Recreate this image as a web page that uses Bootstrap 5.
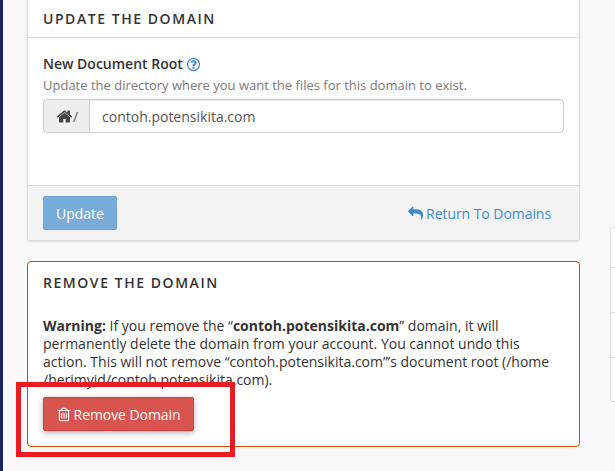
<!DOCTYPE html>
<html lang="en">
<head>
    <meta charset="UTF-8">
    <meta name="viewport" content="width=device-width, initial-scale=1.0">
    <title>Manage Domain</title>
    <link href="https://cdn.jsdelivr.net/npm/bootstrap@5.3.0/dist/css/bootstrap.min.css" rel="stylesheet">
    <style>
        html, body { height: 100%; }
        body {
            background: #f9f9f9;
            color: #333;
            font-family: "Open Sans", "Noto Sans", sans-serif;
            font-size: 14px;
            line-height: 18px;
            overflow: hidden;
        }
        .side-strip { width: 3px; background: #1c2558; flex-shrink: 0; }
        .page-main { width: 553px; margin-left: 24px; flex-shrink: 0; padding-top: 0; }
        .domain-panel {
            border: 1px solid #ddd;
            border-radius: 3px;
            box-shadow: 0 1px 3px rgba(0,0,0,.12);
            margin-top: -3px;
        }
        .domain-panel .card-header {
            background: #fff;
            border-bottom: 1px solid #ddd;
            height: 40px;
            padding: 12px 15px 0;
        }
        .panel-title {
            font-size: 14px;
            font-weight: 600;
            letter-spacing: 1.55px;
            line-height: 18px;
            text-transform: uppercase;
            color: #333;
            margin: 0;
        }
        .domain-panel .card-body { padding: 16px 15px 0; height: 147px; }
        .field-label { font-weight: 600; font-size: 14px; line-height: 20px; display: block; margin: 0; }
        .field-help { color: #7a7a7a; font-size: 13px; line-height: 18px; margin: 2px 0 5px; }
        .root-group .input-group-text {
            background: #eee;
            border-color: #ccc;
            border-radius: 4px 0 0 4px;
            color: #555;
            font-size: 14px;
            height: 34px;
            width: 47px;
            padding: 0 0 0 12px;
        }
        .home-icon { color: #444; vertical-align: -3px; }
        .root-group .form-control {
            border-color: #ccc;
            border-radius: 0 4px 4px 0;
            color: #555;
            font-size: 14px;
            height: 34px;
            padding: 0 12px;
            box-shadow: inset 0 1px 1px rgba(0,0,0,.075);
        }
        .domain-panel .card-footer {
            background: #f3f3f3;
            border-top: 1px solid #ddd;
            height: 55px;
            padding: 10px 28px 0 15px;
            border-radius: 0 0 3px 3px;
        }
        .btn-update {
            background: #78acd9;
            border: 1px solid #6fa4d3;
            border-radius: 2px;
            color: #fff;
            font-size: 14px;
            height: 34px;
            line-height: 20px;
            padding: 7px 12px 5px;
        }
        .back-link { color: #428bca; text-decoration: none; font-size: 14px; letter-spacing: -.06px; margin-top: 9px; }
        .danger-panel {
            border: 1px solid #d14900;
            border-radius: 4px;
            background: #fff;
            height: 186px;
            margin-top: 20px;
            padding: 12px 15px 0;
            box-shadow: none;
        }
        .warn-text { margin: 25px 0 0; line-height: 18px; width: 515px; }
        .warn-text strong { font-weight: 700; }
        .btn-remove {
            background: #d9534f;
            border: 1px solid #d43f3a;
            border-radius: 2px;
            color: #fff;
            font-size: 14px;
            height: 34px;
            line-height: 20px;
            padding: 7px 13px 5px 12px;
            margin-top: 8px;
            letter-spacing: -.07px;
            box-shadow: 0 2px 6px rgba(0,0,0,.3);
        }
        .fa-icon { fill: currentColor; display: inline-block; vertical-align: -2px; }
        .trash-icon { vertical-align: -3px; margin-right: -2px; }
        .help-icon { color: #428bca; vertical-align: -3px; }
        .side-widget {
            width: 60px;
            margin-left: 30px;
            margin-top: 227px;
            flex-shrink: 0;
            height: 175px;
            background: #fff;
            border: 1px solid #ddd;
            border-right: 0;
            border-radius: 4px 0 0 4px;
        }
        .side-row { height: 45px; border-bottom: 1px solid #ddd; }
        .side-row:first-child { height: 40px; }
        .side-row:last-child { border-bottom: 0; }
        .callout-box {
            position: absolute;
            left: 16px;
            top: 382px;
            width: 219px;
            height: 75px;
            border: 5px solid #ed1c24;
            pointer-events: none;
        }
    </style>
</head>
<body>
    <div class="d-flex h-100 position-relative">
        <div class="side-strip"></div>

        <div class="page-main">
            <!-- update panel -->
            <div class="card domain-panel">
                <div class="card-header">
                    <h2 class="panel-title">Update the Domain</h2>
                </div>
                <div class="card-body">
                    <label class="field-label" for="docRoot">New Document Root
                        <svg class="fa-icon help-icon" width="15" height="15" viewBox="0 0 1792 1792"><circle cx="896" cy="896" r="720" fill="none" stroke="currentColor" stroke-width="150"/><path d="M1024 1376v-192q0-14-9-23t-23-9h-192q-14 0-23 9t-9 23v192q0 14 9 23t23 9h192q14 0 23-9t9-23zm256-672q0-88-55.500-163t-138.500-116-170-41q-243 0-371 213-15 24 8 42l132 100q7 6 19 6 16 0 25-12 53-68 86-92 34-24 86-24 48 0 85.500 26t37.500 59q0 38-20 61t-68 45q-63 28-115.500 86.500t-52.500 125.500v36q0 14 9 23t23 9h192q14 0 23-9t9-23q0-19 21.500-49.500t54.500-49.500q32-18 49-28.500t46-35 44.500-48 28-60.500 12.500-81z"/></svg>
                    </label>
                    <p class="field-help">Update the directory where you want the files for this domain to exist.</p>
                    <div class="input-group root-group">
                        <span class="input-group-text">
                            <svg class="fa-icon home-icon" width="17" height="17" viewBox="0 0 1792 1792"><path d="M1472 992v480q0 26-19 45t-45 19h-384v-384h-256v384h-384q-26 0-45-19t-19-45v-480q0-1 .5-3t.5-3l575-474 575 474q1 2 1 6zm223-69l-62 74q-8 9-21 11h-3q-13 0-21-7l-692-577-692 577q-12 8-24 7-13-2-21-11l-62-74q-8-10-7-23.500t11-21.500l719-599q32-26 76-26t76 26l244 204v-195q0-14 9-23t23-9h192q14 0 23 9t9 23v408l219 182q10 8 11 21.500t-7 23.500z"/></svg>/</span>
                        <input id="docRoot" type="text" class="form-control" value="contoh.potensikita.com">
                    </div>
                </div>
                <div class="card-footer d-flex justify-content-between align-items-start">
                    <button type="button" class="btn btn-update">Update</button>
                    <a href="#" class="back-link">
                        <svg class="fa-icon" width="15" height="15" viewBox="0 0 1792 1792"><path d="M1792 1120q0 166-127 451-3 7-10.500 24t-13.500 30-13 22q-12 17-28 17-15 0-23.500-10t-8.500-25q0-9 2.500-26.500t2.500-23.500q5-68 5-123 0-101-17.500-181t-48.500-138.500-80-101-105.500-69.500-133-42.500-154-21.500-175.500-6h-224v256q0 26-19 45t-45 19-45-19l-512-512q-19-19-19-45t19-45l512-512q19-19 45-19t45 19 19 45v256h224q713 0 875 403 53 134 53 333z"/></svg>
                        Return To Domains
                    </a>
                </div>
            </div>

            <!-- remove panel -->
            <div class="danger-panel">
                <h2 class="panel-title">Remove the Domain</h2>
                <p class="warn-text"><strong>Warning:</strong> If you remove the “<strong>contoh.potensikita.com</strong>” domain, it will permanently delete the domain from your account. You cannot undo this action. This will not remove “contoh.potensikita.com”’s document root (/home<br>/herimyid/contoh.potensikita.com).</p>
                <button type="button" class="btn btn-remove">
                    <svg class="fa-icon trash-icon" width="16" height="17" viewBox="0 0 1792 1792"><path d="M704 736v576q0 14-9 23t-23 9h-64q-14 0-23-9t-9-23v-576q0-14 9-23t23-9h64q14 0 23 9t9 23zm256 0v576q0 14-9 23t-23 9h-64q-14 0-23-9t-9-23v-576q0-14 9-23t23-9h64q14 0 23 9t9 23zm256 0v576q0 14-9 23t-23 9h-64q-14 0-23-9t-9-23v-576q0-14 9-23t23-9h64q14 0 23 9t9 23zm128 724v-948h-896v948q0 22 7 40.500t14.500 27 10.500 8.500h832q3 0 10.500-8.500t14.500-27 7-40.500zm-672-1076h448l-48-117q-7-9-17-11h-317q-10 2-17 11zm928 32v64q0 14-9 23t-23 9h-96v948q0 83-47 143.500t-113 60.500h-832q-66 0-113-58.500t-47-141.500v-952h-96q-14 0-23-9t-9-23v-64q0-14 9-23t23-9h309l70-167q15-37 54-63t79-26h320q40 0 79 26t54 63l70 167h309q14 0 23 9t9 23z"/></svg>
                    Remove Domain
                </button>
            </div>
        </div>

        <div class="side-widget">
            <div class="side-row"></div>
            <div class="side-row"></div>
            <div class="side-row"></div>
            <div class="side-row"></div>
        </div>

        <div class="callout-box"></div>
    </div>

    <script src="https://cdn.jsdelivr.net/npm/bootstrap@5.3.0/dist/js/bootstrap.bundle.min.js"></script>
</body>
</html>
